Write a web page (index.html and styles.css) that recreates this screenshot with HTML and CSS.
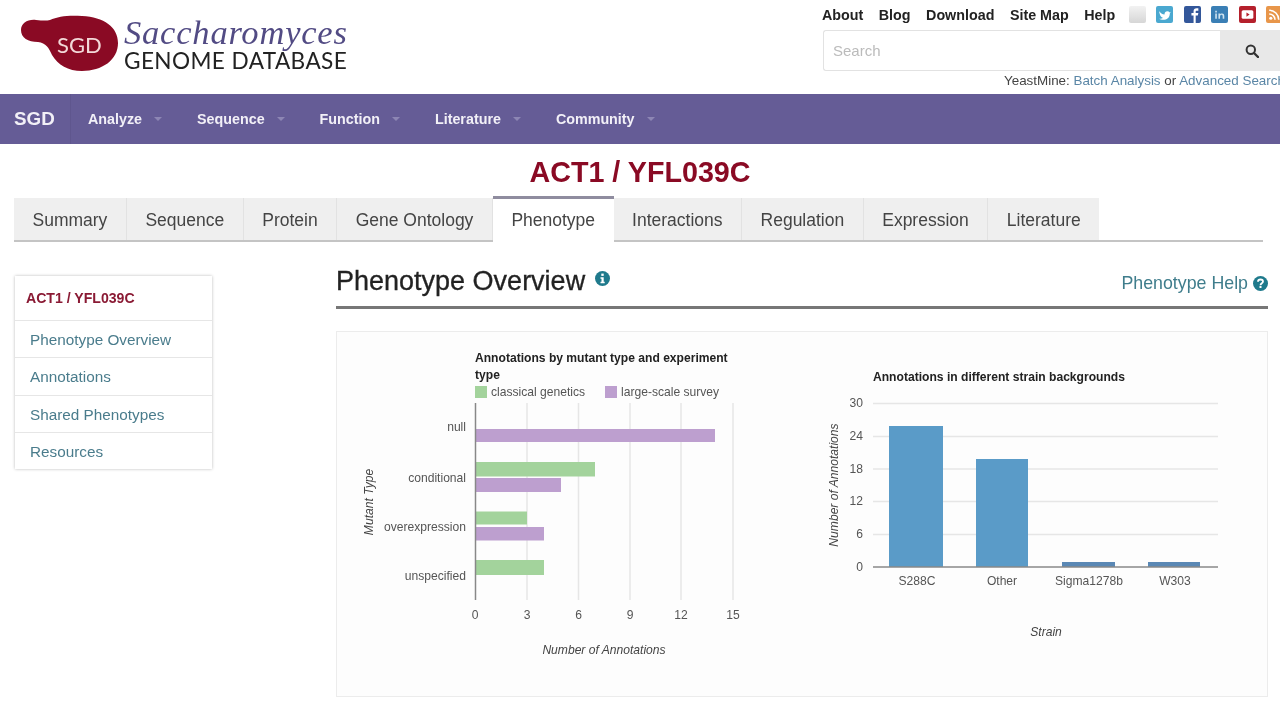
FILE: index.html
```html
<!DOCTYPE html>
<html lang="en">
<head>
    <meta charset="UTF-8">
    <title>ACT1 / YFL039C Phenotype | SGD</title>
    <link rel="stylesheet" href="styles.css">
</head>
<body>
    <!-- top header -->
    <header class="site-header">
        <a class="logo">
            <span class="logo-blob">
                <svg width="100" height="58" viewBox="0 0 100 58">
                    <path fill="#8a0a24" d="M1 15C1 8 8 4 16 5C22 5.500 26 6 30 5C38 1 50 0 62 1C84 2 98 12 98 28C98 45 82 56 62 56C48 56 38 50 32 40C29 33 26 28 18 27C8 27 1 23 1 15Z"/>
                </svg>
                <span class="logo-mark">SGD</span>
            </span>
            <span class="logo-text">
                <span class="logo-top">Saccharomyces</span>
                <span class="logo-bottom">GENOME DATABASE</span>
            </span>
        </a>
        <div class="header-right">
            <div class="top-links">
                <a>About</a>
                <a>Blog</a>
                <a>Download</a>
                <a>Site Map</a>
                <a>Help</a>
                <span class="social">
                    <i class="soc soc-mail"></i>
                    <i class="soc soc-tw"><svg viewBox="0 0 16 16"><path fill="#fff" d="M3 5c2 2 3 3 5 3 0-3 3-4 5-2l1-.5-1 1.500c0 4-3 6-6 6-2 0-3-.5-4-1 2 0 3-.5 3.500-1-2 0-3-3-3.500-5.500z"/></svg></i>
                    <i class="soc soc-fb"><svg viewBox="0 0 16 16"><path fill="#fff" d="M9 16V9H7V6.500h2V5c0-2 1-3 3-3h1.500v2.500H12c-.7 0-1 .3-1 1v1h2.500L13 9h-2v7z"/></svg></i>
                    <i class="soc soc-li"><svg viewBox="0 0 16 16"><path fill="#cfe3ef" d="M4 7h1.500v5H4zM4 4.500h1.500V6H4zM7 7h1.500v.8C9 7 10 7 10.500 7c1.500 0 2 1 2 2.500V12H11V10c0-1-.3-1.700-1-1.700-.8 0-1.500.6-1.500 1.700v2H7z"/></svg></i>
                    <i class="soc soc-yt"><svg viewBox="0 0 16 16"><rect x="2.500" y="4" width="11" height="8" rx="1.500" fill="#fff"/><path fill="#b5202c" d="M7 6l3 2-3 2z"/></svg></i>
                    <i class="soc soc-rss"><svg viewBox="0 0 16 16"><circle cx="4.500" cy="11.500" r="1.500" fill="#fff"/><path fill="none" stroke="#fff" stroke-width="1.500" d="M3 7.500a5.500 5.500 0 0 1 5.500 5.500M3 4a9 9 0 0 1 9 9"/></svg></i>
                </span>
            </div>
            <div class="search-row">
                <div class="search-input">Search</div>
                <div class="search-btn">
                    <svg width="14" height="14" viewBox="0 0 14 14"><circle cx="5.800" cy="5.800" r="4.200" fill="none" stroke="#333" stroke-width="2"/><path d="M9 9l4 4" stroke="#333" stroke-width="2.400" stroke-linecap="round"/></svg>
                </div>
            </div>
            <div class="yeastmine">YeastMine: <a>Batch Analysis</a> or <a>Advanced Search</a></div>
        </div>
    </header>

    <!-- purple nav -->
    <nav class="main-nav">
        <a class="nav-brand">SGD</a>
        <a class="nav-item">Analyze</a>
        <a class="nav-item">Sequence</a>
        <a class="nav-item">Function</a>
        <a class="nav-item">Literature</a>
        <a class="nav-item">Community</a>
    </nav>

    <h1 class="gene-title">ACT1 / YFL039C</h1>

    <!-- tabs -->
    <ul class="tabs">
        <li>Summary</li>
        <li>Sequence</li>
        <li>Protein</li>
        <li>Gene Ontology</li>
        <li class="active">Phenotype</li>
        <li>Interactions</li>
        <li>Regulation</li>
        <li>Expression</li>
        <li>Literature</li>
    </ul>

    <div class="content">
        <!-- side menu -->
        <aside class="side-menu">
            <div class="side-head">ACT1 / YFL039C</div>
            <a class="side-item">Phenotype Overview</a>
            <a class="side-item">Annotations</a>
            <a class="side-item">Shared Phenotypes</a>
            <a class="side-item">Resources</a>
        </aside>

        <main class="main-col">
            <div class="page-head">
                <h2>Phenotype Overview <svg class="info-icon" width="15" height="15" viewBox="0 0 15 15"><circle cx="7.500" cy="7.500" r="7.500" fill="#1f7a8c"/><rect x="6.300" y="2.600" width="2.400" height="2.300" fill="#fff"/><path fill="#fff" d="M5.500 6.200h3.200v4.600h1v1.500H5.500v-1.500h1V7.700h-1z"/></svg></h2>
                <a class="help-link">Phenotype Help <svg width="15" height="15" viewBox="0 0 15 15"><circle cx="7.500" cy="7.500" r="7.500" fill="#1f7a8c"/><path fill="none" stroke="#fff" stroke-width="1.800" d="M5 5.800C5 4.300 6.200 3.500 7.500 3.500S10 4.300 10 5.600C10 7.300 7.500 7.300 7.500 9.200"/><rect x="6.500" y="10" width="2" height="2" fill="#fff"/></svg></a>
            </div>

            <div class="chart-panel">
                <!-- mutant type chart -->
                <svg class="chart chart-left" width="470" height="364" viewBox="337 332 470 364">
                    <text class="chart-title" x="475" y="362">Annotations by mutant type and experiment</text>
                    <text class="chart-title" x="475" y="379">type</text>
                    <rect x="475" y="386" width="12" height="12" fill="#a3d39c"/>
                    <text class="legend" x="491" y="396">classical genetics</text>
                    <rect x="605" y="386" width="12" height="12" fill="#bd9fcf"/>
                    <text class="legend" x="621" y="396">large-scale survey</text>

                    <path class="grid" d="M527 403V600M578.500 403V600M630 403V600M681 403V600M733 403V600"/>

                    <rect x="476" y="429" width="239" height="13" fill="#bd9fcf"/>
                    <rect x="476" y="462" width="119" height="14.500" fill="#a3d39c"/>
                    <rect x="476" y="478" width="85" height="14" fill="#bd9fcf"/>
                    <rect x="476" y="511.500" width="51" height="13" fill="#a3d39c"/>
                    <rect x="476" y="527" width="68" height="13.500" fill="#bd9fcf"/>
                    <rect x="476" y="560" width="68" height="15" fill="#a3d39c"/>
                    <path class="axis" d="M475.500 403V600"/>

                    <text class="tick end" x="466" y="431">null</text>
                    <text class="tick end" x="466" y="482">conditional</text>
                    <text class="tick end" x="466" y="531">overexpression</text>
                    <text class="tick end" x="466" y="580">unspecified</text>

                    <text class="tick mid" x="475" y="619">0</text>
                    <text class="tick mid" x="527" y="619">3</text>
                    <text class="tick mid" x="578.500" y="619">6</text>
                    <text class="tick mid" x="630" y="619">9</text>
                    <text class="tick mid" x="681" y="619">12</text>
                    <text class="tick mid" x="733" y="619">15</text>

                    <text class="axis-label mid" x="604" y="654">Number of Annotations</text>
                    <text class="axis-label mid" transform="translate(373 502) rotate(-90)">Mutant Type</text>
                </svg>

                <!-- strain chart -->
                <svg class="chart chart-right" width="460" height="364" viewBox="807 332 460 364">
                    <text class="chart-title" x="873" y="381">Annotations in different strain backgrounds</text>

                    <path class="grid" d="M873 403.500H1218M873 436.500H1218M873 469H1218M873 501.500H1218M873 534.500H1218"/>

                    <rect x="889" y="426" width="54" height="141" fill="#5a9bc8"/>
                    <rect x="976" y="459" width="52" height="108" fill="#5a9bc8"/>
                    <rect x="1062" y="562" width="53" height="5" fill="#5a88b5"/>
                    <rect x="1148" y="562" width="52" height="5" fill="#5a88b5"/>
                    <path class="axis" d="M873 567H1218"/>

                    <text class="tick end" x="863" y="407">30</text>
                    <text class="tick end" x="863" y="440">24</text>
                    <text class="tick end" x="863" y="473">18</text>
                    <text class="tick end" x="863" y="505">12</text>
                    <text class="tick end" x="863" y="538">6</text>
                    <text class="tick end" x="863" y="571">0</text>

                    <text class="tick mid" x="917" y="585">S288C</text>
                    <text class="tick mid" x="1002" y="585">Other</text>
                    <text class="tick mid" x="1089" y="585">Sigma1278b</text>
                    <text class="tick mid" x="1175" y="585">W303</text>

                    <text class="axis-label mid" x="1046" y="636">Strain</text>
                    <text class="axis-label mid" transform="translate(838 485) rotate(-90)">Number of Annotations</text>
                </svg>
            </div>
        </main>
    </div>
</body>
</html>
```

FILE: styles.css
```css
/* page */
html, body {
    margin: 0;
    height: 720px;
    overflow: hidden;
}

body {
    width: 1280px;
    background: #fff;
    color: #222;
    font-family: "Liberation Sans", Arial, sans-serif;
    filter: blur(.45px);
}

a {
    color: #3f7d8c;
    text-decoration: none;
}

/* header */
.site-header {
    display: flex;
    justify-content: space-between;
    height: 94px;
    box-sizing: border-box;
}

.logo {
    display: flex;
    align-items: flex-start;
    padding: 15px 0 0 20px;
}

.logo-blob {
    position: relative;
    display: block;
    width: 100px;
    height: 58px;
}

.logo-mark {
    position: absolute;
    left: 37px;
    top: 16px;
    color: #f3d9d9;
    font-family: "Lato", sans-serif;
    font-size: 22px;
}

.logo-text {
    display: flex;
    flex-direction: column;
    margin-left: 4px;
}

.logo-top {
    color: #524b84;
    font-family: "Liberation Serif", serif;
    font-style: italic;
    font-size: 34.500px;
    line-height: 35px;
    letter-spacing: .8px;
}

.logo-bottom {
    color: #222;
    font-family: "Lato", sans-serif;
    font-size: 22.600px;
    line-height: 22px;
    letter-spacing: .4px;
}

.header-right {
    width: 457px;
    flex: none;
}

.top-links {
    display: flex;
    align-items: center;
    height: 29px;
    margin-left: -1px;
    white-space: nowrap;
    font-weight: bold;
    font-size: 14.300px;
}

.top-links a {
    flex: none;
    color: #222;
    margin-right: 15.500px;
}

.social {
    display: flex;
    flex: none;
    gap: 10.500px;
    margin-left: -2px;
}

.soc {
    display: block;
    width: 17px;
    height: 17px;
    flex: none;
    border-radius: 2px;
}

.soc svg {
    display: block;
    width: 17px;
    height: 17px;
}

.soc-mail {
    background: linear-gradient(#f2f2f2, #d6d6d6);
}

.soc-tw {
    background: #4aa8d0;
}

.soc-fb {
    background: #33579a;
}

.soc-li {
    background: #3a7fb5;
}

.soc-yt {
    background: #b5202c;
}

.soc-rss {
    background: #e8964a;
}

.search-row {
    display: flex;
    height: 41px;
    margin-top: 1px;
}

.search-input {
    width: 398px;
    box-sizing: border-box;
    padding: 12px 9px;
    border: 1px solid #e2e2e2;
    border-right: none;
    border-radius: 3px 0 0 3px;
    color: #bbb;
    font-size: 15px;
    line-height: 16px;
}

.search-btn {
    display: flex;
    align-items: center;
    justify-content: center;
    width: 60px;
    box-sizing: border-box;
    padding-left: 4px;
    background: #e8e8e8;
}

.yeastmine {
    margin-top: 2px;
    padding-left: 181px;
    white-space: nowrap;
    color: #444;
    font-size: 13.400px;
    line-height: 16px;
}

.yeastmine a {
    color: #5a86a6;
}

/* purple nav */
.main-nav {
    display: flex;
    align-items: center;
    height: 50px;
    background: #655c96;
    color: #fff;
}

.main-nav a {
    color: #f2f0f7;
    font-weight: bold;
    font-size: 14.300px;
}

.main-nav .nav-brand {
    width: 71px;
    box-sizing: border-box;
    padding-left: 14px;
    line-height: 50px;
    border-right: 1px solid #5f568e;
    font-size: 18.800px;
}

.nav-item {
    display: flex;
    align-items: center;
    margin-right: 55px;
}

.nav-brand + .nav-item {
    margin-left: 17px;
}

.nav-item::after {
    content: "";
    margin-left: 12px;
    margin-right: -20px;
    border: 4px solid transparent;
    border-top-color: #8d86b4;
    border-bottom: none;
}

/* gene title */
.gene-title {
    margin: 0;
    height: 52px;
    color: #8a0a24;
    text-align: center;
    font-size: 28.700px;
    line-height: 57px;
}

/* tabs */
.tabs {
    display: flex;
    align-items: flex-start;
    width: 1249px;
    height: 46px;
    margin: 0 0 0 14px;
    padding: 0;
    box-sizing: border-box;
    list-style: none;
    border-bottom: 2px solid #c4c4c4;
}

.tabs li {
    height: 42px;
    margin-top: 2px;
    padding: 0 18.500px;
    background: #efefef;
    border-right: 1px solid #e2e2e2;
    color: #444;
    font-size: 17.500px;
    line-height: 44px;
}

.tabs li:last-child {
    border-right: none;
}

.tabs li.active {
    height: 44px;
    margin-top: 0;
    background: #fff;
    border-top: 3px solid #8f8c9f;
    border-right: none;
    line-height: 42px;
}

/* content */
.content {
    display: flex;
    align-items: flex-start;
    padding: 0 12px 0 15px;
}

.side-menu {
    display: flex;
    flex-direction: column;
    width: 197px;
    flex: none;
    margin-top: 34px;
    background: #fff;
    box-shadow: 0 0 3px #bbb;
}

.side-head {
    padding: 0 11px;
    color: #8a1a34;
    font-weight: bold;
    font-size: 14.100px;
    line-height: 44px;
}

.side-item {
    height: 37.250px;
    padding-left: 15px;
    border-top: 1px solid #e6e6e6;
    box-sizing: border-box;
    color: #4a7c8c;
    font-size: 15.300px;
    line-height: 37px;
}

.main-col {
    width: 932px;
    margin-left: 124px;
}

.page-head {
    display: flex;
    justify-content: space-between;
    align-items: center;
    height: 67px;
    box-sizing: border-box;
    border-bottom: 3px solid #777;
}

.page-head h2 {
    margin: 14px 0 0;
    color: #222;
    font-weight: normal;
    font-size: 27px;
    -webkit-text-stroke: .3px #222;
}

.info-icon {
    position: relative;
    top: -4px;
    margin-left: 2px;
}

.help-link {
    display: flex;
    align-items: center;
    gap: 5px;
    margin-top: 18px;
    font-size: 17.800px;
}

/* charts */
.chart-panel {
    display: flex;
    height: 366px;
    margin-top: 22px;
    box-sizing: border-box;
    border: 1px solid #ececec;
    background: #fdfdfd;
}

.chart {
    display: block;
    flex: none;
}

.chart-title {
    fill: #222;
    font-weight: bold;
    font-size: 12.100px;
}

.legend {
    fill: #555;
    font-size: 12.100px;
}

.tick {
    fill: #555;
    font-size: 12.100px;
}

.axis-label {
    fill: #444;
    font-style: italic;
    font-size: 12.100px;
}

.end {
    text-anchor: end;
}

.mid {
    text-anchor: middle;
}

.grid {
    fill: none;
    stroke: #e6e6e6;
    stroke-width: 1.500;
}

.axis {
    fill: none;
    stroke: #888;
    stroke-width: 1.500;
}
```
